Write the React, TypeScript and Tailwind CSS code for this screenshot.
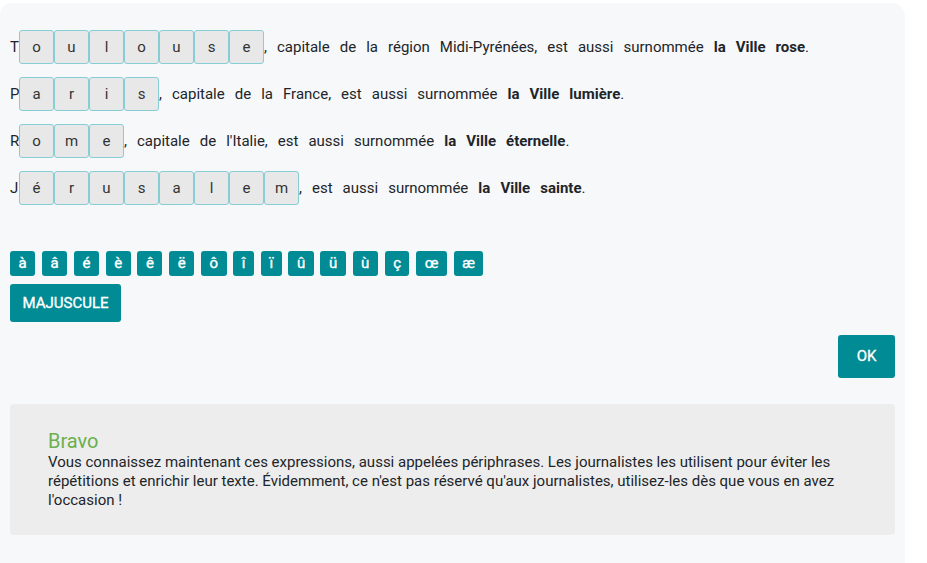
import React from "react";

const rows: { first: string; letters: string[]; rest: string; bold: string }[] = [
  { first: "T", letters: ["o", "u", "l", "o", "u", "s", "e"], rest: ", capitale de la région Midi-Pyrénées, est aussi surnommée ", bold: "la Ville rose" },
  { first: "P", letters: ["a", "r", "i", "s"], rest: ", capitale de la France, est aussi surnommée ", bold: "la Ville lumière" },
  { first: "R", letters: ["o", "m", "e"], rest: ", capitale de l'Italie, est aussi surnommée ", bold: "la Ville éternelle" },
  { first: "J", letters: ["é", "r", "u", "s", "a", "l", "e", "m"], rest: ", est aussi surnommée ", bold: "la Ville sainte" },
];

const accents = ["à", "â", "é", "è", "ê", "ë", "ô", "î", "ï", "û", "ü", "ù", "ç", "œ", "æ"];

export default function App() {
  return (
    <div className="w-[927px] h-[563px] bg-white overflow-hidden" style={{ fontFamily: "Roboto, 'Liberation Sans', sans-serif" }}>
      <div className="mt-[3px] w-[905px] h-[600px] bg-[#f7f8fa] rounded-tr-[14px] rounded-tl-[12px] pl-[10px] pr-[10px] pt-[27px]">
        <div className="flex flex-col gap-[13px]">
          {rows.map((r, i) => (
            <div key={i} className="flex items-center h-[34px] text-[15px] text-[#212529] [word-spacing:6.3px] whitespace-pre">
              <span className="w-[9px]">{r.first}</span>
              <div className="flex">
                {r.letters.map((l, j) => (
                  <div
                    key={j}
                    className="w-[35px] h-[34px] flex items-center justify-center bg-[#e8e8e8] border border-[#86cdd5] rounded-[3px] text-[15px] text-[#333]"
                  >
                    {l}
                  </div>
                ))}
              </div>
              <span>
                {r.rest}
                <b className="font-bold">{r.bold}</b>.
              </span>
            </div>
          ))}
        </div>

        <div className="mt-[46px] flex gap-[6.8px]">
          {accents.map((a) => (
            <button
              key={a}
              className="h-[25px] min-w-[20px] px-[8.5px] bg-[#008b95] text-white text-[15px] font-normal [-webkit-text-stroke:0.35px_white] rounded-[3px] flex items-center justify-center"
            >
              {a}
            </button>
          ))}
        </div>
        <button className="mt-[8px] h-[38px] w-[111px] bg-[#008b95] text-white text-[15px] font-normal [-webkit-text-stroke:0.35px_white] rounded-[3px] flex items-center justify-center">
          MAJUSCULE
        </button>
        <div className="flex justify-end mt-[13px]">
          <button className="h-[43px] w-[57px] bg-[#008b95] text-white text-[15px] font-normal [-webkit-text-stroke:0.35px_white] rounded-[3px] flex items-center justify-center">
            OK
          </button>
        </div>
        <div className="mt-[26px] h-[131px] bg-[#ededed] rounded-[4px] pl-[38px] pr-[48px] pt-[25px]">
          <div className="text-[20px] leading-[24px] text-[#6ab04c]">Bravo</div>
          <p className="text-[15px] leading-[18.75px] text-[#212529]">
            Vous connaissez maintenant ces expressions, aussi appelées périphrases. Les journalistes les utilisent pour éviter les
            répétitions et enrichir leur texte. Évidemment, ce n'est pas réservé qu'aux journalistes, utilisez-les dès que vous en avez
            l'occasion !
          </p>
        </div>
      </div>
    </div>
  );
}
